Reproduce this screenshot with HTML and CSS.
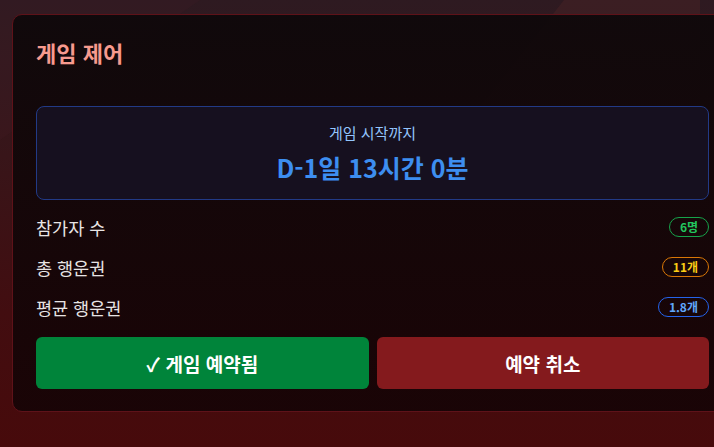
FILE: index.html
```html
<!DOCTYPE html>
<html lang="ko">
<head>
<meta charset="utf-8">
<link rel="stylesheet" href="styles.css">
</head>
<body>
<div class="bg-shape shape-a"></div>
<div class="bg-shape shape-b"></div>
<div class="page">
  <section class="card">
    <h2 class="title">게임 제어</h2>
    <div class="countdown">
      <div class="countdown-label">게임 시작까지</div>
      <div class="countdown-value">D-1일 13시간 0분</div>
    </div>
    <div class="stats">
      <div class="stat-row"><span class="stat-name">참가자 수</span><span class="badge badge-green">6명</span></div>
      <div class="stat-row"><span class="stat-name">총 행운권</span><span class="badge badge-amber">11개</span></div>
      <div class="stat-row"><span class="stat-name">평균 행운권</span><span class="badge badge-blue">1.8개</span></div>
    </div>
    <div class="actions">
      <button class="btn btn-green">✓ 게임 예약됨</button>
      <button class="btn btn-red">예약 취소</button>
    </div>
  </section>
</div>
</body>
</html>
```
FILE: styles.css
```css
* { box-sizing: border-box; }
html, body { margin: 0; padding: 0; }
body {
  width: 714px;
  height: 447px;
  overflow: hidden;
  position: relative;
  background: linear-gradient(180deg, #2e1a21 0%, #381519 35%, #420d10 70%, #470a0b 100%);
  font-family: "Noto Sans CJK KR", "Noto Sans", sans-serif;
}
.bg-shape { position: absolute; pointer-events: none; }
.shape-a {
  left: 360px; top: 0; width: 340px; height: 130px;
  background: rgba(90, 40, 40, 0.3);
  clip-path: polygon(0 0, 100% 0, 100% 100%, 30% 100%, 60% 0);
}
.shape-b {
  left: 0; top: 0; width: 200px; height: 140px;
  background: rgba(70, 30, 40, 0.2);
  clip-path: polygon(0 0, 100% 0, 0 100%);
}
.page {
  position: relative;
  padding: 14px 0 0 12px;
}
.card {
  width: 721px;
  background: linear-gradient(180deg, rgba(14, 8, 10, 0.94) 0%, rgba(24, 4, 6, 0.96) 100%);
  border: 1px solid #5e1219;
  border-radius: 10px;
  padding: 23px 23px 22px 23px;
}
.title {
  margin: 0;
  font-size: 22px;
  line-height: 28px;
  font-weight: 700;
  color: #f79a8e;
}
.countdown {
  margin-top: 40px;
  background: #16101f;
  border: 1px solid #223a86;
  border-radius: 8px;
  padding: 16px 16px 16px;
  text-align: center;
}
.countdown-label {
  font-size: 15px;
  line-height: 20px;
  color: #93c5fd;
}
.countdown-value {
  margin-top: 8px;
  font-size: 25px;
  line-height: 32px;
  font-weight: 700;
  color: #3d8ef0;
}
.stats {
  margin-top: 15px;
  display: flex;
  flex-direction: column;
  gap: 16px;
}
.stat-row {
  display: flex;
  justify-content: space-between;
  align-items: center;
  height: 24px;
}
.stat-name {
  font-size: 17.5px;
  color: #e8e4e4;
}
.badge {
  font-size: 12px;
  font-weight: 700;
  line-height: 18px;
  padding: 0 10px;
  border-radius: 999px;
  border: 1px solid;
}
.badge-green { color: #22c55e; border-color: #16a34a; }
.badge-amber { color: #facc15; border-color: #d97706; }
.badge-blue { color: #60a5fa; border-color: #2563eb; }
.actions {
  margin-top: 18px;
  display: grid;
  grid-template-columns: 1fr 1fr;
  gap: 8px;
}
.btn {
  height: 52px;
  border: none;
  border-radius: 6px;
  font-family: "Noto Sans CJK KR", "Noto Sans", sans-serif;
  font-size: 19px;
  font-weight: 700;
  color: #ffffff;
}
.btn-green { background: #00843a; }
.btn-red { background: #841a1d; }
```
